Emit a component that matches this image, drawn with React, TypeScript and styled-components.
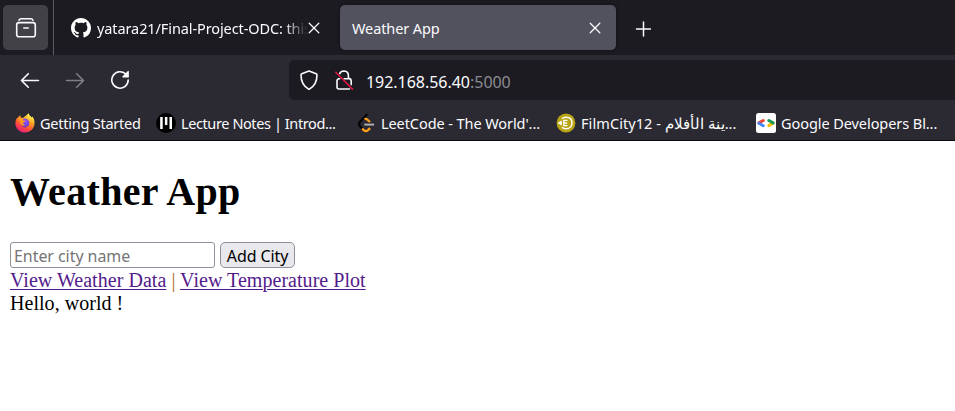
import React from "react";
import styled, { createGlobalStyle } from "styled-components";

const UI_FONT = '"Noto Sans", "Open Sans", sans-serif';

const GlobalStyle = createGlobalStyle`
  html, body { margin: 0; padding: 0; background: #fff; }
  body { overflow: hidden; }
  *, *::before, *::after { box-sizing: border-box; }
`;

const Window = styled.div`
  display: flex;
  flex-direction: column;
  width: 955px;
  height: 411px;
  overflow: hidden;
  background: #fff;
`;

const Chrome = styled.header`
  color: #fbfbfe;
  font-family: ${UI_FONT};
  background: #2b2a33;
  border-bottom: 1px solid #0c0c0d;
  height: 141px;
  flex: none;
`;

const TabStrip = styled.div`
  display: flex;
  align-items: flex-start;
  height: 55px;
  background: #1c1b22;
`;

const ViewButton = styled.button`
  display: grid;
  place-items: center;
  width: 45px;
  height: 45px;
  margin: 5px 5px 0 3px;
  padding: 0;
  border: 0;
  border-radius: 5px;
  background: #424147;
  color: #fbfbfe;
`;

const Tab = styled.div<{ $active?: boolean }>`
  display: flex;
  align-items: center;
  width: 276px;
  height: 45px;
  margin: 5px 5px 0 0;
  padding: 0 15px 0 12px;
  border-radius: 5px;
  background: ${(p) => (p.$active ? "#52525e" : "transparent")};
  box-shadow: ${(p) => (p.$active ? "0 0 4px rgba(0,0,0,.4)" : "none")};
`;

const TabDivider = styled.div`
  width: 1px;
  height: 55px;
  margin-right: 5px;
  background: #5a5960;
`;

const Label = styled.span<{ $size?: number; $spacing?: number }>`
  font-size: ${(p) => p.$size ?? 14.5}px;
  letter-spacing: ${(p) => p.$spacing ?? 0}px;
  line-height: 20px;
  white-space: pre;
`;

const TabTitle = styled(Label)<{ $fade?: boolean }>`
  flex: 1;
  min-width: 0;
  overflow: hidden;
  margin-top: 1px;
  padding-left: ${(p) => (p.$fade ? 1 : 0)}px;
  mask-image: ${(p) => (p.$fade ? "linear-gradient(to left, transparent, #000 24px)" : "none")};
`;

const IconButton = styled.button`
  display: grid;
  place-items: center;
  width: 20px;
  height: 20px;
  padding: 0;
  border: 0;
  background: none;
  color: inherit;
`;

const TabClose = styled(IconButton)`
  width: 12px;
  flex: none;
`;

const NewTab = styled(IconButton)`
  margin: 19px 0 0 12px;
`;

const Favicon = styled.span`
  display: block;
  width: 20px;
  height: 20px;
  margin-right: 5px;
  flex: none;
  svg { display: block; }
`;

const NavBar = styled.div`
  display: flex;
  align-items: center;
  height: 50px;
`;

const NavButtons = styled.div`
  display: flex;
  gap: 25px;
  width: 289px;
  padding-left: 20px;
`;

const NavButton = styled(IconButton)<{ $disabled?: boolean }>`
  opacity: ${(p) => (p.$disabled ? 0.4 : 1)};
`;

const UrlBar = styled.div`
  display: flex;
  align-items: center;
  flex: 1;
  height: 40px;
  padding-left: 10px;
  border-radius: 5px 0 0 5px;
  background: #1c1b22;
`;

const UrlIcon = styled.span<{ $gap: number }>`
  width: 20px;
  height: 20px;
  margin-right: ${(p) => p.$gap}px;
  svg { display: block; }
`;

const UrlText = styled(Label)`
  margin-top: 4px;
`;

const Port = styled.span`
  color: #8c8b91;
`;

const Bookmarks = styled.nav`
  display: flex;
  padding: 8px 0 0 15px;
`;

const Bookmark = styled.div<{ $width: number }>`
  display: flex;
  width: ${(p) => p.$width}px;
  flex: none;
`;

const Page = styled.main`
  padding: 0 10px;
  font: 20px/23px "Liberation Serif", serif;
  letter-spacing: 0.04px;
  color: #000;
`;

const Title = styled.h1`
  margin: 28px 0 27px;
  font-size: 40px;
  line-height: 46px;
  font-weight: bold;
  letter-spacing: 0.32px;
`;

const Form = styled.form`
  display: flex;
  gap: 5px;
  margin-bottom: 1px;
`;

const CityInput = styled.input`
  width: 205px;
  height: 26px;
  padding: 2px 3px 0;
  border: 1px solid #8f8f9d;
  border-radius: 3px;
  font: 16px/20px ${UI_FONT};
  letter-spacing: -0.06px;
  &::placeholder { color: #757575; opacity: 1; }
`;

const AddButton = styled.button`
  width: 75px;
  height: 26px;
  padding: 2px 0 0;
  border: 1px solid #8f8f9d;
  border-radius: 5px;
  background: #e9e9ed;
  color: #000;
  font: 16px/20px ${UI_FONT};
  letter-spacing: -0.1px;
  white-space: nowrap;
`;

const PageLink = styled.a`
  color: #551a8b;
  text-decoration: underline;
  text-decoration-thickness: 1px;
  text-underline-offset: 2px;
`;

const Separator = styled.span`
  color: #b5691c;
`;

const Close = () => (
  <svg width="12" height="12" viewBox="0 0 12 12" stroke="currentColor" strokeWidth="1.25" strokeLinecap="round">
    <path d="M1.2 1.2l9.6 9.6M10.8 1.2l-9.6 9.6" />
  </svg>
);

const ViewIcon = () => (
  <svg width="22" height="22" viewBox="0 0 22 22" fill="none" stroke="currentColor" strokeWidth="1.6" strokeLinecap="round" strokeLinejoin="round">
    <path d="M4 3.2Q4.6 1.7 6.2 1.7h9.6q1.6 0 2.2 1.5" />
    <rect x="1.7" y="5.6" width="18.6" height="14.2" rx="2.3" />
    <path d="M8.8 11h4.4" />
  </svg>
);

const Github = () => (
  <svg width="20" height="20" viewBox="0 0 16 16" fill="#fff">
    <path d="M8 0C3.58 0 0 3.58 0 8c0 3.54 2.29 6.53 5.47 7.59.4.07.55-.17.55-.38 0-.19-.01-.82-.01-1.49-2.01.37-2.53-.49-2.69-.94-.09-.23-.48-.94-.82-1.13-.28-.15-.68-.52-.01-.53.63-.01 1.08.58 1.23.82.72 1.21 1.87.87 2.33.66.07-.52.28-.87.51-1.07-1.78-.2-3.64-.89-3.64-3.95 0-.87.31-1.59.82-2.15-.08-.2-.36-1.02.08-2.12 0 0 .67-.21 2.2.82.64-.18 1.32-.27 2-.27.68 0 1.36.09 2 .27 1.53-1.04 2.2-.82 2.2-.82.44 1.1.16 1.92.08 2.12.51.56.82 1.27.82 2.15 0 3.07-1.87 3.75-3.65 3.95.29.25.54.73.54 1.48 0 1.07-.01 1.93-.01 2.2 0 .21.15.46.55.38A8.013 8.013 0 0016 8c0-4.42-3.58-8-8-8z" />
  </svg>
);

const Arrow = ({ flip }: { flip?: boolean }) => (
  <svg width="20" height="20" viewBox="0 0 20 20" fill="none" stroke="currentColor" strokeWidth="1.6" strokeLinecap="round" strokeLinejoin="round">
    <path d={flip ? "M1.500 10.500h17M11.700 3.700l6.800 6.800-6.800 6.800" : "M18.500 10.500h-17M8.300 3.700L1.500 10.500l6.800 6.800"} />
  </svg>
);

const Reload = () => (
  <svg width="20" height="20" viewBox="0 0 20 20">
    <path d="M16.2 4.6A8.2 8.2 0 1 0 18.2 10" fill="none" stroke="currentColor" strokeWidth="1.6" strokeLinecap="round" />
    <path d="M18.900 1.200v6.200h-6.200q-.9-.3-.3-1l5.500-5.400q.7-.5 1 .2z" fill="currentColor" />
  </svg>
);

const Shield = () => (
  <svg width="20" height="20" viewBox="0 0 20 20" fill="none" stroke="currentColor" strokeWidth="1.6" strokeLinejoin="round">
    <path d="M10 1L17.2 3.8Q18 4.2 18 5.1C18 12 15.6 16.5 10 19.4C4.4 16.5 2 12 2 5.1Q2 4.2 2.8 3.8Z" />
  </svg>
);

const InsecureLock = () => (
  <svg width="20" height="20" viewBox="0 0 20 20" fill="none" stroke="currentColor" strokeWidth="1.6" strokeLinecap="round">
    <path d="M5.700 3.600Q6.800 1 10 1q4.400.2 4.400 4.600V8.600h.8q2 .3 2 2.400v3.600M10.200 8.800h4.200M5.600 8.800H5Q3 9 3 11v6q0 2 2 2h10.500" />
    <path d="M1.800 2.200l16.700 16.900" stroke="#e3173e" strokeWidth="1.500" />
  </svg>
);

const Firefox = () => (
  <svg width="20" height="20" viewBox="0 0 20 20">
    <defs>
      <linearGradient id="ffBody" x1=".8" y1="0" x2=".25" y2="1">
        <stop offset=".1" stopColor="#fff44f" />
        <stop offset=".4" stopColor="#ff9a1f" />
        <stop offset=".7" stopColor="#ff4a3d" />
        <stop offset="1" stopColor="#e31587" />
      </linearGradient>
      <radialGradient id="ffGlobe" cx=".6" cy=".3" r=".8">
        <stop offset="0" stopColor="#9059ff" />
        <stop offset="1" stopColor="#5b2fc0" />
      </radialGradient>
    </defs>
    <path d="M13.6.2c.3 2 1.9 2.8 3.3 4.2.3-.2.2-.7.1-1.1 1.9 1.9 2.7 4.6 2.5 7.3-.3 5.2-4.4 9-9.5 9S.5 15.700.4 10.500C.3 8 1.300 5.600 2.500 4.200c0 .4.200.7.400.9.500-1.400 1.500-2.400 2.500-2.900-.1 1 .2 2 .8 2.600h2.300C9.500 3.300 11.500 2.600 13.600.2z" fill="url(#ffBody)" />
    <circle cx="10" cy="10" r="4.400" fill="url(#ffGlobe)" />
    <path d="M2.700 5.300c1.300-.8 3.100-.6 3.800-.1 1.200-.3 2.100 0 2.600.2-.7.7-1.200 1.200-1 2h2.300c.4.900-1.600 1.500-2 2.100-.3 1.200.2 2.700 2 3.100-3.200.9-5.800-1.600-5.400-4.700-.9-.5-1.700-1.500-2.300-2.600z" fill="#ff9820" />
  </svg>
);

const Lecture = () => (
  <svg width="20" height="20" viewBox="0 0 20 20">
    <circle cx="10" cy="10" r="10" fill="#000" />
    <path d="M4.200 4h2.500v12H4.200zM8.900 4h2.500v8H8.900zM13.500 4H16v12h-2.500z" fill="#fff" />
  </svg>
);

const Leetcode = () => (
  <svg width="20" height="20" viewBox="0 0 20 20" fill="none" strokeLinecap="butt" strokeLinejoin="round">
    <path d="M11.300 1L3.800 9Q2 11 3.800 13l2.600 2.800" stroke="#050505" strokeWidth="2.200" />
    <path d="M8.600 6.300q1.300-.8 2.600.2l2.800 2.500M6.200 15.500l1.800 1.900q2 1.500 3.700 0l2.400-2.300" stroke="#ffa116" strokeWidth="2.300" />
    <path d="M8.300 11.600h9.800" stroke="#b3b3b3" strokeWidth="1.900" />
  </svg>
);

const FilmCity = () => (
  <svg width="20" height="20" viewBox="0 0 20 20">
    <circle cx="10" cy="10" r="9.400" fill="#b8a414" />
    <path d="M6 5.700Q7.500 4.300 10 4.300c3.900 0 6 2.500 6 5.700s-2.400 5.700-6 5.700q-2.600 0-4-1.400" fill="none" stroke="#fff" strokeWidth="1.500" />
    <path d="M1.500 10l4.300-2.500v5z" fill="#fff" />
    <path d="M11.500 7.300H7.800v5.400h3.700M7.800 10h3.400" fill="none" stroke="#fff" strokeWidth="1.300" />
  </svg>
);

const GoogleDev = () => (
  <svg width="20" height="20" viewBox="0 0 20 20" fill="none" strokeWidth="3" strokeLinecap="round">
    <rect width="20" height="20" rx="2.500" fill="#fff" />
    <path d="M7.200 7.500L2.900 9.900" stroke="#ea4335" />
    <path d="M2.900 10.200l4.300 2.500" stroke="#4285f4" />
    <path d="M12.800 12.600l4.300-2.500" stroke="#fbbc04" />
    <path d="M12.800 7.500l4.300 2.400" stroke="#159957" />
  </svg>
);

const bookmarks = [
  { label: "Getting Started", icon: <Firefox />, width: 141, spacing: -0.24 },
  { label: "Lecture Notes | Introd...", icon: <Lecture />, width: 200, spacing: -0.4 },
  { label: "LeetCode - The World'...", icon: <Leetcode />, width: 200, spacing: -0.08 },
  { label: "FilmCity12 - ينة الأفلام\u200e...", icon: <FilmCity />, width: 200, spacing: 0.08 },
  { label: "Google Developers Bl...", icon: <GoogleDev />, width: 199, spacing: -0.07 },
];

export default function App() {
  return (
    <Window>
      <GlobalStyle />
      <Chrome>
        <TabStrip>
          <ViewButton aria-label="View tabs"><ViewIcon /></ViewButton>
          <TabDivider />
          <Tab>
            <Favicon><Github /></Favicon>
            <TabTitle $fade $spacing={-0.1}>yatara21/Final-Project-ODC: this</TabTitle>
            <TabClose aria-label="Close tab"><Close /></TabClose>
          </Tab>
          <Tab $active>
            <TabTitle $spacing={-0.1}>Weather App</TabTitle>
            <TabClose aria-label="Close tab"><Close /></TabClose>
          </Tab>
          <NewTab aria-label="New tab">
            <svg width="16" height="16" viewBox="0 0 16 16" stroke="currentColor" strokeWidth="1.500" strokeLinecap="round">
              <path d="M8.500 1v14M1.500 8h14" />
            </svg>
          </NewTab>
        </TabStrip>
        <NavBar>
          <NavButtons>
            <NavButton aria-label="Back"><Arrow /></NavButton>
            <NavButton aria-label="Forward" $disabled><Arrow flip /></NavButton>
            <NavButton aria-label="Reload"><Reload /></NavButton>
          </NavButtons>
          <UrlBar>
            <UrlIcon $gap={15}><Shield /></UrlIcon>
            <UrlIcon $gap={12}><InsecureLock /></UrlIcon>
            <UrlText $size={16} $spacing={-0.03}>192.168.56.40<Port>:5000</Port></UrlText>
          </UrlBar>
        </NavBar>
        <Bookmarks>
          {bookmarks.map((b) => (
            <Bookmark key={b.label} $width={b.width}>
              <Favicon>{b.icon}</Favicon>
              <Label $spacing={b.spacing}>{b.label}</Label>
            </Bookmark>
          ))}
        </Bookmarks>
      </Chrome>
      <Page>
        <Title>Weather App</Title>
        <Form onSubmit={(e) => e.preventDefault()}>
          <CityInput placeholder="Enter city name" />
          <AddButton>Add City</AddButton>
        </Form>
        <div>
          <PageLink href="#data">View Weather Data</PageLink> <Separator>|</Separator>{" "}
          <PageLink href="#plot">View Temperature Plot</PageLink>
        </div>
        <div>Hello, world !</div>
      </Page>
    </Window>
  );
}
